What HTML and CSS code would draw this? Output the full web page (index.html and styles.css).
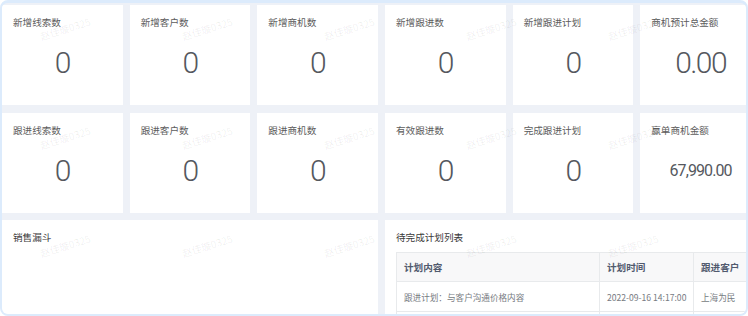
FILE: index.html
```html
<!DOCTYPE html>
<html lang="zh-CN">
<head>
<meta charset="utf-8">
<link rel="stylesheet" href="styles.css">
</head>
<body>
<div class="frame">
  <div class="grid">
    <div class="card"><div class="card-title">新增线索数</div><div class="card-value">0</div></div>
    <div class="card"><div class="card-title">新增客户数</div><div class="card-value">0</div></div>
    <div class="card"><div class="card-title">新增商机数</div><div class="card-value">0</div></div>
    <div class="card"><div class="card-title">新增跟进数</div><div class="card-value">0</div></div>
    <div class="card"><div class="card-title">新增跟进计划</div><div class="card-value">0</div></div>
    <div class="card"><div class="card-title">商机预计总金额</div><div class="card-value">0.00</div></div>
    <div class="card"><div class="card-title">跟进线索数</div><div class="card-value">0</div></div>
    <div class="card"><div class="card-title">跟进客户数</div><div class="card-value">0</div></div>
    <div class="card"><div class="card-title">跟进商机数</div><div class="card-value">0</div></div>
    <div class="card"><div class="card-title">有效跟进数</div><div class="card-value">0</div></div>
    <div class="card"><div class="card-title">完成跟进计划</div><div class="card-value">0</div></div>
    <div class="card"><div class="card-title">赢单商机金额</div><div class="card-value small">67,990.00</div></div>
    <div class="panel panel-left"><div class="panel-title">销售漏斗</div></div>
    <div class="panel panel-right">
      <div class="panel-title">待完成计划列表</div>
      <table class="plan-table">
        <thead>
          <tr><th class="c1">计划内容</th><th class="c2">计划时间</th><th class="c3">跟进客户</th></tr>
        </thead>
        <tbody>
          <tr><td>跟进计划：与客户沟通价格内容</td><td>2022-09-16 14:17:00</td><td>上海为民</td></tr>
          <tr><td>&nbsp;</td><td>&nbsp;</td><td>&nbsp;</td></tr>
        </tbody>
      </table>
    </div>
  </div>
  <div class="watermarks">
    <span>赵佳璇0325</span><span>赵佳璇0325</span><span>赵佳璇0325</span><span>赵佳璇0325</span><span>赵佳璇0325</span><span>赵佳璇0325</span>
    <span>赵佳璇0325</span><span>赵佳璇0325</span><span>赵佳璇0325</span><span>赵佳璇0325</span><span>赵佳璇0325</span><span>赵佳璇0325</span>
    <span>赵佳璇0325</span><span>赵佳璇0325</span><span>赵佳璇0325</span><span>赵佳璇0325</span><span>赵佳璇0325</span><span>赵佳璇0325</span>
  </div>
</div>
</body>
</html>
```
FILE: styles.css
```css
* { box-sizing: border-box; }
html, body { margin: 0; padding: 0; }
body {
  width: 748px;
  height: 316px;
  overflow: hidden;
  font-family: "Noto Sans CJK SC", "Noto Sans", sans-serif;
  background: #ffffff;
}
.frame {
  position: relative;
  width: 748px;
  height: 316px;
  border: 2px solid #dcebfc;
  border-top-width: 3px;
  border-radius: 8px;
  background: #eef1f7;
  overflow: hidden;
  padding-top: 2px;
}
.grid {
  display: grid;
  grid-template-columns: repeat(6, 120.67px);
  grid-template-rows: 100px 100px 110px;
  column-gap: 7px;
  row-gap: 7.5px;
}
.card {
  background: #fff;
  display: flex;
  flex-direction: column;
}
.card-title {
  font-size: 9.6px;
  line-height: 14px;
  color: #5c5c5c;
  padding: 10px 11px 0;
  white-space: nowrap;
}
.card-value {
  margin-top: 14px;
  height: 40px;
  display: flex;
  align-items: center;
  justify-content: center;
  font-family: Roboto, "Noto Sans", sans-serif;
  font-weight: 300;
  font-size: 30px;
  letter-spacing: -1.6px;
  line-height: 40px;
  color: #55585e;
}
.card-value.small {
  font-size: 16px;
  font-weight: 400;
  letter-spacing: -0.9px;
}
.panel {
  background: #fff;
  padding: 10px 11px 0;
}
.panel-left { grid-column: 1 / span 3; }
.panel-right { grid-column: 4 / span 3; }
.panel-title {
  font-size: 9.6px;
  line-height: 14px;
  color: #3a3a3a;
  white-space: nowrap;
}
.plan-table {
  margin-top: 8px;
  width: 355px;
  border-collapse: collapse;
  border: 1px solid #e8eaec;
  table-layout: fixed;
}
.plan-table th, .plan-table td {
  border: 1px solid #e8eaec;
  text-align: left;
  padding: 0 0 0 7px;
  white-space: nowrap;
  overflow: hidden;
}
.plan-table th {
  height: 29px;
  background: #f8f8f9;
  font-size: 9.6px;
  font-weight: 700;
  color: #515a6e;
}
.plan-table td {
  height: 30px;
  font-size: 8.6px;
  color: #777b82;
}
.plan-table .c1 { width: 203px; }
.plan-table .c2 { width: 94px; }
.watermarks {
  position: absolute;
  left: -8px;
  top: -29px;
  display: grid;
  grid-template-columns: repeat(6, 142px);
  grid-auto-rows: 108.5px;
  pointer-events: none;
}
.watermarks span {
  display: flex;
  align-items: center;
  justify-content: center;
  font-size: 10px;
  color: rgba(0, 0, 0, 0.07);
  transform: rotate(-17deg);
  white-space: nowrap;
}
```
